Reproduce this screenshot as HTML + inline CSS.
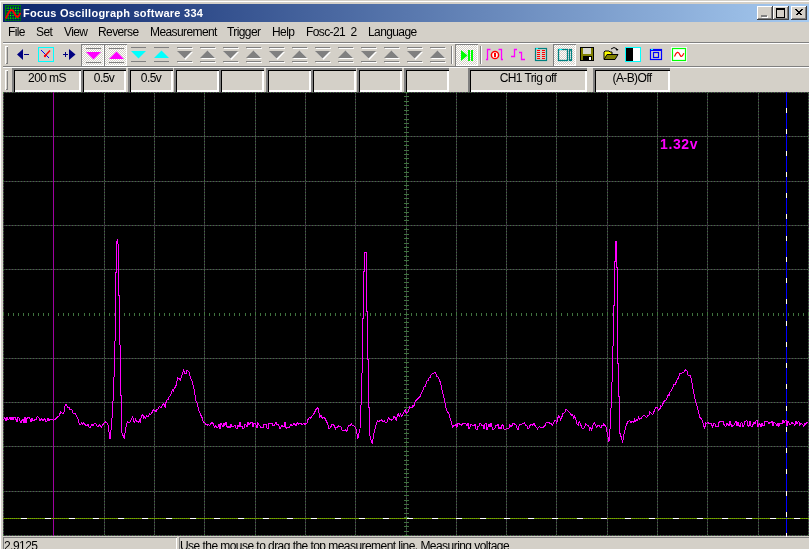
<!DOCTYPE html>
<html><head><meta charset="utf-8"><style>
html,body{margin:0;padding:0;}
body{width:809px;height:549px;overflow:hidden;background:#D4D0C8;position:relative;font-family:"Liberation Sans",sans-serif;}
div{will-change:transform;}
</style></head><body>
<div style="position:absolute;left:0px;top:0px;width:809px;height:1px;background:#D4D0C8;"></div><div style="position:absolute;left:0px;top:1px;width:809px;height:1px;background:#FFFFFF;"></div><div style="position:absolute;left:0px;top:1px;width:1px;height:548px;background:#FFFFFF;"></div><div style="position:absolute;left:1px;top:2px;width:808px;height:1px;background:#D4D0C8;"></div><div style="position:absolute;left:1px;top:2px;width:1px;height:547px;background:#D4D0C8;"></div><div style="position:absolute;left:3px;top:4px;width:806px;height:18px;background:linear-gradient(to right,#0A246A,#A6CAF0);"></div><div style="position:absolute;left:5px;top:5px;width:16px;height:16px;background:#008000"></div><svg style="position:absolute;left:5px;top:5px" width="16" height="16" viewBox="0 0 16 16">
<rect x="0" y="0" width="16" height="16" fill="#008000"/>
<g fill="#000080"><rect x="1.3" y="1.3" width="1.6" height="1.6"/><rect x="1.3" y="3.8" width="1.6" height="1.6"/><rect x="1.3" y="6.3" width="1.6" height="1.6"/><rect x="1.3" y="8.8" width="1.6" height="1.6"/><rect x="1.3" y="11.3" width="1.6" height="1.6"/><rect x="1.3" y="13.8" width="1.6" height="1.6"/><rect x="3.8" y="1.3" width="1.6" height="1.6"/><rect x="3.8" y="3.8" width="1.6" height="1.6"/><rect x="3.8" y="6.3" width="1.6" height="1.6"/><rect x="3.8" y="8.8" width="1.6" height="1.6"/><rect x="3.8" y="11.3" width="1.6" height="1.6"/><rect x="3.8" y="13.8" width="1.6" height="1.6"/><rect x="6.3" y="1.3" width="1.6" height="1.6"/><rect x="6.3" y="3.8" width="1.6" height="1.6"/><rect x="6.3" y="6.3" width="1.6" height="1.6"/><rect x="6.3" y="8.8" width="1.6" height="1.6"/><rect x="6.3" y="11.3" width="1.6" height="1.6"/><rect x="6.3" y="13.8" width="1.6" height="1.6"/><rect x="8.8" y="1.3" width="1.6" height="1.6"/><rect x="8.8" y="3.8" width="1.6" height="1.6"/><rect x="8.8" y="6.3" width="1.6" height="1.6"/><rect x="8.8" y="8.8" width="1.6" height="1.6"/><rect x="8.8" y="11.3" width="1.6" height="1.6"/><rect x="8.8" y="13.8" width="1.6" height="1.6"/><rect x="11.3" y="1.3" width="1.6" height="1.6"/><rect x="11.3" y="3.8" width="1.6" height="1.6"/><rect x="11.3" y="6.3" width="1.6" height="1.6"/><rect x="11.3" y="8.8" width="1.6" height="1.6"/><rect x="11.3" y="11.3" width="1.6" height="1.6"/><rect x="11.3" y="13.8" width="1.6" height="1.6"/><rect x="13.8" y="1.3" width="1.6" height="1.6"/><rect x="13.8" y="3.8" width="1.6" height="1.6"/><rect x="13.8" y="6.3" width="1.6" height="1.6"/><rect x="13.8" y="8.8" width="1.6" height="1.6"/><rect x="13.8" y="11.3" width="1.6" height="1.6"/><rect x="13.8" y="13.8" width="1.6" height="1.6"/></g><g fill="#00FF00"><rect x="2.5" y="2.5" width="1" height="1"/><rect x="2.5" y="5.0" width="1" height="1"/><rect x="2.5" y="7.5" width="1" height="1"/><rect x="2.5" y="10.0" width="1" height="1"/><rect x="2.5" y="12.5" width="1" height="1"/><rect x="5.0" y="2.5" width="1" height="1"/><rect x="5.0" y="5.0" width="1" height="1"/><rect x="5.0" y="7.5" width="1" height="1"/><rect x="5.0" y="10.0" width="1" height="1"/><rect x="5.0" y="12.5" width="1" height="1"/><rect x="7.5" y="2.5" width="1" height="1"/><rect x="7.5" y="5.0" width="1" height="1"/><rect x="7.5" y="7.5" width="1" height="1"/><rect x="7.5" y="10.0" width="1" height="1"/><rect x="7.5" y="12.5" width="1" height="1"/><rect x="10.0" y="2.5" width="1" height="1"/><rect x="10.0" y="5.0" width="1" height="1"/><rect x="10.0" y="7.5" width="1" height="1"/><rect x="10.0" y="10.0" width="1" height="1"/><rect x="10.0" y="12.5" width="1" height="1"/><rect x="12.5" y="2.5" width="1" height="1"/><rect x="12.5" y="5.0" width="1" height="1"/><rect x="12.5" y="7.5" width="1" height="1"/><rect x="12.5" y="10.0" width="1" height="1"/><rect x="12.5" y="12.5" width="1" height="1"/></g>
<path d="M0.8,13.5 C3,10 4,5 6.5,5 C9,5 10,12 12.5,12 C14,12 14.5,9 15.5,7.8" fill="none" stroke="#FF0000" stroke-width="1.8"/>
</svg><div style="position:absolute;left:23px;top:5px;height:16px;line-height:16px;color:#fff;font-weight:bold;font-size:11px;letter-spacing:0.25px;white-space:nowrap">Focus Oscillograph software 334</div><div style="position:absolute;left:757px;top:6px;width:16px;height:14px;background:#D4D0C8;box-shadow:inset -1px -1px #404040, inset 1px 1px #FFFFFF, inset -2px -2px #808080, inset 2px 2px #D4D0C8"><div style="position:absolute;left:4px;top:9px;width:6px;height:2px;background:#808080;box-shadow:1px 1px #fff"></div></div><div style="position:absolute;left:773px;top:6px;width:16px;height:14px;background:#D4D0C8;box-shadow:inset -1px -1px #404040, inset 1px 1px #FFFFFF, inset -2px -2px #808080, inset 2px 2px #D4D0C8"><div style="position:absolute;left:3px;top:2px;width:7px;height:7px;border:1px solid #000;border-top-width:2px"></div></div><div style="position:absolute;left:791px;top:6px;width:16px;height:14px;background:#D4D0C8;box-shadow:inset -1px -1px #404040, inset 1px 1px #FFFFFF, inset -2px -2px #808080, inset 2px 2px #D4D0C8"><svg style="position:absolute;left:0;top:0" width="16" height="14"><path d="M4.5,3.5 L10.5,9.5 M10.5,3.5 L4.5,9.5 M5.5,3.5 L11.5,9.5 M11.5,3.5 L5.5,9.5" stroke="#000" stroke-width="1" shape-rendering="crispEdges"/></svg></div><div style="position:absolute;left:8px;top:25px;height:14px;line-height:14px;font-size:12px;letter-spacing:-0.6px;color:#000;white-space:nowrap">File</div><div style="position:absolute;left:36px;top:25px;height:14px;line-height:14px;font-size:12px;letter-spacing:-0.6px;color:#000;white-space:nowrap">Set</div><div style="position:absolute;left:64px;top:25px;height:14px;line-height:14px;font-size:12px;letter-spacing:-0.6px;color:#000;white-space:nowrap">View</div><div style="position:absolute;left:98px;top:25px;height:14px;line-height:14px;font-size:12px;letter-spacing:-0.6px;color:#000;white-space:nowrap">Reverse</div><div style="position:absolute;left:150px;top:25px;height:14px;line-height:14px;font-size:12px;letter-spacing:-0.6px;color:#000;white-space:nowrap">Measurement</div><div style="position:absolute;left:227px;top:25px;height:14px;line-height:14px;font-size:12px;letter-spacing:-0.6px;color:#000;white-space:nowrap">Trigger</div><div style="position:absolute;left:272px;top:25px;height:14px;line-height:14px;font-size:12px;letter-spacing:-0.6px;color:#000;white-space:nowrap">Help</div><div style="position:absolute;left:306px;top:25px;height:14px;line-height:14px;font-size:12px;letter-spacing:-0.6px;color:#000;white-space:nowrap">Fosc-21&nbsp;&nbsp;2</div><div style="position:absolute;left:368px;top:25px;height:14px;line-height:14px;font-size:12px;letter-spacing:-0.6px;color:#000;white-space:nowrap">Language</div><div style="position:absolute;left:3px;top:42px;width:806px;height:1px;background:#808080;"></div><div style="position:absolute;left:3px;top:43px;width:806px;height:1px;background:#FFFFFF;"></div><div style="position:absolute;left:3px;top:66px;width:806px;height:1px;background:#808080;"></div><div style="position:absolute;left:3px;top:67px;width:806px;height:1px;background:#FFFFFF;"></div><div style="position:absolute;left:5px;top:46px;width:3px;height:18px;box-shadow:inset 1px 1px #fff, inset -1px -1px #808080"></div><div style="position:absolute;left:5px;top:70px;width:3px;height:20px;box-shadow:inset 1px 1px #fff, inset -1px -1px #808080"></div><svg style="position:absolute;left:0;top:0" width="809" height="92"><path d="M17,54.5 L23,49 L23,60 Z" fill="#000080"/><rect x="24" y="54" width="5" height="1" fill="#000080"/><rect x="38.5" y="47.5" width="15" height="14" fill="none" stroke="#00FFFF" stroke-width="1"/><path d="M41,50 L49,58" stroke="#0000FF" stroke-width="1"/><path d="M50,50.5 L45,56" stroke="#FF0000" stroke-width="1.5"/><circle cx="45" cy="56" r="1.2" fill="#FF0000"/><rect x="63" y="54" width="5" height="1" fill="#000080"/><rect x="65" y="52" width="1" height="5" fill="#000080"/><path d="M75.5,54.5 L69,49 L69,60 Z" fill="#000080"/></svg><div style="position:absolute;left:81px;top:44px;width:23px;height:22px;background:repeating-conic-gradient(#FFFFFF 0 25%, #D4D0C8 0 50%) 0 0/2px 2px;box-shadow:inset 1px 1px #808080, inset -1px -1px #FFFFFF"></div><div style="position:absolute;left:104px;top:44px;width:23px;height:22px;background:repeating-conic-gradient(#FFFFFF 0 25%, #D4D0C8 0 50%) 0 0/2px 2px;box-shadow:inset 1px 1px #808080, inset -1px -1px #FFFFFF"></div><svg style="position:absolute;left:0;top:0" width="809" height="92" shape-rendering="crispEdges"><rect x="86" y="48" width="15" height="1" fill="#808080"/><rect x="86" y="62" width="15" height="1" fill="#808080"/><path d="M86,52 L101,52 L93.5,59.5 Z" fill="#FF00FF" shape-rendering="auto"/><rect x="109" y="48" width="15" height="1" fill="#808080"/><rect x="109" y="62" width="15" height="1" fill="#808080"/><path d="M109,59 L124,59 L116.5,51.5 Z" fill="#FF00FF" shape-rendering="auto"/><rect x="131" y="47" width="15" height="1" fill="#808080"/><rect x="131" y="61" width="15" height="1" fill="#808080"/><path d="M131,51 L146,51 L138.5,58.5 Z" fill="#00FFFF" shape-rendering="auto"/><rect x="154" y="47" width="15" height="1" fill="#808080"/><rect x="154" y="61" width="15" height="1" fill="#808080"/><path d="M154,58 L169,58 L161.5,50.5 Z" fill="#00FFFF" shape-rendering="auto"/><rect x="178" y="48" width="15" height="1" fill="#fff"/><rect x="178" y="62" width="15" height="1" fill="#fff"/><path d="M178,52 L193,52 L185.5,60 Z" fill="#fff" shape-rendering="auto"/><rect x="177" y="47" width="15" height="1" fill="#808080"/><rect x="177" y="61" width="15" height="1" fill="#808080"/><path d="M177,51 L192,51 L184.5,58.5 Z" fill="#808080" shape-rendering="auto"/><rect x="201" y="48" width="15" height="1" fill="#fff"/><rect x="201" y="62" width="15" height="1" fill="#fff"/><path d="M201,59 L216,59 L208.5,51 Z" fill="#fff" shape-rendering="auto"/><rect x="200" y="47" width="15" height="1" fill="#808080"/><rect x="200" y="61" width="15" height="1" fill="#808080"/><path d="M200,58 L215,58 L207.5,50.5 Z" fill="#808080" shape-rendering="auto"/><rect x="224" y="48" width="15" height="1" fill="#fff"/><rect x="224" y="62" width="15" height="1" fill="#fff"/><path d="M224,52 L239,52 L231.5,60 Z" fill="#fff" shape-rendering="auto"/><rect x="223" y="47" width="15" height="1" fill="#808080"/><rect x="223" y="61" width="15" height="1" fill="#808080"/><path d="M223,51 L238,51 L230.5,58.5 Z" fill="#808080" shape-rendering="auto"/><rect x="247" y="48" width="15" height="1" fill="#fff"/><rect x="247" y="62" width="15" height="1" fill="#fff"/><path d="M247,59 L262,59 L254.5,51 Z" fill="#fff" shape-rendering="auto"/><rect x="246" y="47" width="15" height="1" fill="#808080"/><rect x="246" y="61" width="15" height="1" fill="#808080"/><path d="M246,58 L261,58 L253.5,50.5 Z" fill="#808080" shape-rendering="auto"/><rect x="270" y="48" width="15" height="1" fill="#fff"/><rect x="270" y="62" width="15" height="1" fill="#fff"/><path d="M270,52 L285,52 L277.5,60 Z" fill="#fff" shape-rendering="auto"/><rect x="269" y="47" width="15" height="1" fill="#808080"/><rect x="269" y="61" width="15" height="1" fill="#808080"/><path d="M269,51 L284,51 L276.5,58.5 Z" fill="#808080" shape-rendering="auto"/><rect x="293" y="48" width="15" height="1" fill="#fff"/><rect x="293" y="62" width="15" height="1" fill="#fff"/><path d="M293,59 L308,59 L300.5,51 Z" fill="#fff" shape-rendering="auto"/><rect x="292" y="47" width="15" height="1" fill="#808080"/><rect x="292" y="61" width="15" height="1" fill="#808080"/><path d="M292,58 L307,58 L299.5,50.5 Z" fill="#808080" shape-rendering="auto"/><rect x="316" y="48" width="15" height="1" fill="#fff"/><rect x="316" y="62" width="15" height="1" fill="#fff"/><path d="M316,52 L331,52 L323.5,60 Z" fill="#fff" shape-rendering="auto"/><rect x="315" y="47" width="15" height="1" fill="#808080"/><rect x="315" y="61" width="15" height="1" fill="#808080"/><path d="M315,51 L330,51 L322.5,58.5 Z" fill="#808080" shape-rendering="auto"/><rect x="339" y="48" width="15" height="1" fill="#fff"/><rect x="339" y="62" width="15" height="1" fill="#fff"/><path d="M339,59 L354,59 L346.5,51 Z" fill="#fff" shape-rendering="auto"/><rect x="338" y="47" width="15" height="1" fill="#808080"/><rect x="338" y="61" width="15" height="1" fill="#808080"/><path d="M338,58 L353,58 L345.5,50.5 Z" fill="#808080" shape-rendering="auto"/><rect x="362" y="48" width="15" height="1" fill="#fff"/><rect x="362" y="62" width="15" height="1" fill="#fff"/><path d="M362,52 L377,52 L369.5,60 Z" fill="#fff" shape-rendering="auto"/><rect x="361" y="47" width="15" height="1" fill="#808080"/><rect x="361" y="61" width="15" height="1" fill="#808080"/><path d="M361,51 L376,51 L368.5,58.5 Z" fill="#808080" shape-rendering="auto"/><rect x="385" y="48" width="15" height="1" fill="#fff"/><rect x="385" y="62" width="15" height="1" fill="#fff"/><path d="M385,59 L400,59 L392.5,51 Z" fill="#fff" shape-rendering="auto"/><rect x="384" y="47" width="15" height="1" fill="#808080"/><rect x="384" y="61" width="15" height="1" fill="#808080"/><path d="M384,58 L399,58 L391.5,50.5 Z" fill="#808080" shape-rendering="auto"/><rect x="408" y="48" width="15" height="1" fill="#fff"/><rect x="408" y="62" width="15" height="1" fill="#fff"/><path d="M408,52 L423,52 L415.5,60 Z" fill="#fff" shape-rendering="auto"/><rect x="407" y="47" width="15" height="1" fill="#808080"/><rect x="407" y="61" width="15" height="1" fill="#808080"/><path d="M407,51 L422,51 L414.5,58.5 Z" fill="#808080" shape-rendering="auto"/><rect x="431" y="48" width="15" height="1" fill="#fff"/><rect x="431" y="62" width="15" height="1" fill="#fff"/><path d="M431,59 L446,59 L438.5,51 Z" fill="#fff" shape-rendering="auto"/><rect x="430" y="47" width="15" height="1" fill="#808080"/><rect x="430" y="61" width="15" height="1" fill="#808080"/><path d="M430,58 L445,58 L437.5,50.5 Z" fill="#808080" shape-rendering="auto"/></svg><div style="position:absolute;left:451px;top:46px;width:1px;height:18px;background:#808080;"></div><div style="position:absolute;left:452px;top:46px;width:1px;height:18px;background:#FFFFFF;"></div><div style="position:absolute;left:455px;top:44px;width:23px;height:22px;background:repeating-conic-gradient(#FFFFFF 0 25%, #D4D0C8 0 50%) 0 0/2px 2px;box-shadow:inset 1px 1px #808080, inset -1px -1px #FFFFFF"></div><div style="position:absolute;left:480px;top:46px;width:1px;height:18px;background:#808080;"></div><div style="position:absolute;left:481px;top:46px;width:1px;height:18px;background:#FFFFFF;"></div><div style="position:absolute;left:553px;top:44px;width:23px;height:22px;background:repeating-conic-gradient(#FFFFFF 0 25%, #D4D0C8 0 50%) 0 0/2px 2px;box-shadow:inset 1px 1px #808080, inset -1px -1px #FFFFFF"></div><svg style="position:absolute;left:0;top:0" width="809" height="92"><path d="M461,50 L467.5,55.5 L461,61 Z" fill="#00FF00"/><rect x="468" y="50" width="2" height="11" fill="#00FF00"/><rect x="471" y="50" width="2" height="11" fill="#00FF00"/><path d="M490.5,49.5 H487.5 V59.5 H486" fill="none" stroke="#FF00FF" stroke-width="1.3"/><path d="M498.5,49.5 H501.5 V59.5 H503" fill="none" stroke="#FF00FF" stroke-width="1.3"/><circle cx="495" cy="55" r="3.6" fill="#FFFFFF" stroke="#FF0000" stroke-width="1.5"/><rect x="494" y="53" width="2" height="4" fill="#FF0000"/><path d="M511,56.5 H514.5 V49.5 H517 M519,52.5 H521.5 V59.5 H525" fill="none" stroke="#FF00FF" stroke-width="1.3"/><rect x="535.5" y="48.5" width="11" height="12" fill="none" stroke="#008080" stroke-width="1.2"/><rect x="536" y="48" width="2" height="1" fill="#00FFFF"/><rect x="537" y="50" width="3" height="1" fill="#FF0000"/><rect x="542" y="50" width="3" height="1" fill="#FF0000"/><rect x="537" y="52" width="3" height="1" fill="#FF0000"/><rect x="542" y="52" width="3" height="1" fill="#FF0000"/><rect x="537" y="54" width="3" height="1" fill="#FF0000"/><rect x="542" y="54" width="3" height="1" fill="#FF0000"/><rect x="537" y="56" width="3" height="1" fill="#FF0000"/><rect x="542" y="56" width="3" height="1" fill="#FF0000"/><rect x="537" y="58" width="3" height="1" fill="#FF0000"/><rect x="542" y="58" width="3" height="1" fill="#FF0000"/><rect x="558.5" y="49.5" width="9" height="11" fill="none" stroke="#008080" stroke-width="1.3"/><rect x="569.5" y="49.5" width="2" height="11" fill="none" stroke="#008080" stroke-width="1.2"/><rect x="559" y="49" width="3" height="1" fill="#00FFFF"/><rect x="580" y="47" width="14" height="14" fill="#000"/><rect x="581" y="48" width="12" height="12" fill="#808000"/><rect x="583" y="48" width="8" height="6" fill="#D8D8D0"/><rect x="583" y="56" width="9" height="5" fill="#000"/><rect x="589" y="57" width="2" height="3" fill="#fff"/><path d="M604,52 L605,51 L609,51 L610,52 L612,52 L612,54 L604,59 Z" fill="#FFFF00" stroke="#000" stroke-width="1"/><path d="M604,59.5 L607,54.5 L618,54.5 L615,59.5 Z" fill="#808000" stroke="#000" stroke-width="1"/><path d="M611,49 Q614,46 617,49" fill="none" stroke="#000" stroke-width="1"/><path d="M615.5,49 L618.5,49 L617,51 Z" fill="#000"/><rect x="625.5" y="47.5" width="15" height="14" fill="#FFFFFF" stroke="#00FFFF" stroke-width="1"/><rect x="626" y="48" width="7" height="13" fill="#000"/><rect x="650.5" y="49.5" width="11" height="10" fill="none" stroke="#0000FF" stroke-width="1.2"/><rect x="650" y="49" width="12" height="2" fill="#0000FF"/><rect x="651" y="49" width="2" height="1" fill="#00FFFF"/><rect x="653.5" y="52.5" width="5" height="5" fill="none" stroke="#0000FF" stroke-width="1.2"/><rect x="671" y="47" width="16" height="15" fill="#FFFFFF"/><rect x="672.5" y="48.5" width="13" height="12" fill="#FFFFFF" stroke="#00FF00" stroke-width="1.2"/><path d="M674.5,56.5 Q677.5,49 680,55 Q681.5,58.5 683.8,53.3" fill="none" stroke="#FF0000" stroke-width="1.2"/></svg><div style="position:absolute;left:12px;top:68px;width:69px;height:24px;box-shadow:inset 2px 2px #808080, inset 3px 3px #000000, inset -2px -2px #FFFFFF"><div style="position:absolute;left:0;top:3px;width:70px;height:14px;line-height:14px;font-size:12px;letter-spacing:-0.6px;text-align:center;white-space:nowrap;color:#000">200 mS</div></div><div style="position:absolute;left:81px;top:68px;width:45px;height:24px;box-shadow:inset 2px 2px #808080, inset 3px 3px #000000, inset -2px -2px #FFFFFF"><div style="position:absolute;left:0;top:3px;width:46px;height:14px;line-height:14px;font-size:12px;letter-spacing:-0.6px;text-align:center;white-space:nowrap;color:#000">0.5v</div></div><div style="position:absolute;left:128px;top:68px;width:45px;height:24px;box-shadow:inset 2px 2px #808080, inset 3px 3px #000000, inset -2px -2px #FFFFFF"><div style="position:absolute;left:0;top:3px;width:46px;height:14px;line-height:14px;font-size:12px;letter-spacing:-0.6px;text-align:center;white-space:nowrap;color:#000">0.5v</div></div><div style="position:absolute;left:174px;top:68px;width:45px;height:24px;box-shadow:inset 2px 2px #808080, inset 3px 3px #000000, inset -2px -2px #FFFFFF"><div style="position:absolute;left:0;top:3px;width:46px;height:14px;line-height:14px;font-size:12px;letter-spacing:-0.6px;text-align:center;white-space:nowrap;color:#000"></div></div><div style="position:absolute;left:219px;top:68px;width:45px;height:24px;box-shadow:inset 2px 2px #808080, inset 3px 3px #000000, inset -2px -2px #FFFFFF"><div style="position:absolute;left:0;top:3px;width:46px;height:14px;line-height:14px;font-size:12px;letter-spacing:-0.6px;text-align:center;white-space:nowrap;color:#000"></div></div><div style="position:absolute;left:266px;top:68px;width:45px;height:24px;box-shadow:inset 2px 2px #808080, inset 3px 3px #000000, inset -2px -2px #FFFFFF"><div style="position:absolute;left:0;top:3px;width:46px;height:14px;line-height:14px;font-size:12px;letter-spacing:-0.6px;text-align:center;white-space:nowrap;color:#000"></div></div><div style="position:absolute;left:311px;top:68px;width:45px;height:24px;box-shadow:inset 2px 2px #808080, inset 3px 3px #000000, inset -2px -2px #FFFFFF"><div style="position:absolute;left:0;top:3px;width:46px;height:14px;line-height:14px;font-size:12px;letter-spacing:-0.6px;text-align:center;white-space:nowrap;color:#000"></div></div><div style="position:absolute;left:357px;top:68px;width:45px;height:24px;box-shadow:inset 2px 2px #808080, inset 3px 3px #000000, inset -2px -2px #FFFFFF"><div style="position:absolute;left:0;top:3px;width:46px;height:14px;line-height:14px;font-size:12px;letter-spacing:-0.6px;text-align:center;white-space:nowrap;color:#000"></div></div><div style="position:absolute;left:404px;top:68px;width:45px;height:24px;box-shadow:inset 2px 2px #808080, inset 3px 3px #000000, inset -2px -2px #FFFFFF"><div style="position:absolute;left:0;top:3px;width:46px;height:14px;line-height:14px;font-size:12px;letter-spacing:-0.6px;text-align:center;white-space:nowrap;color:#000"></div></div><div style="position:absolute;left:468px;top:68px;width:119px;height:24px;box-shadow:inset 2px 2px #808080, inset 3px 3px #000000, inset -2px -2px #FFFFFF"><div style="position:absolute;left:0;top:3px;width:120px;height:14px;line-height:14px;font-size:12px;letter-spacing:-0.6px;text-align:center;white-space:nowrap;color:#000">CH1 Trig off</div></div><div style="position:absolute;left:593px;top:68px;width:77px;height:24px;box-shadow:inset 2px 2px #808080, inset 3px 3px #000000, inset -2px -2px #FFFFFF"><div style="position:absolute;left:0;top:3px;width:78px;height:14px;line-height:14px;font-size:12px;letter-spacing:-0.6px;text-align:center;white-space:nowrap;color:#000">(A-B)Off</div></div><svg style="position:absolute;left:0;top:0" width="809" height="549"><rect x="3" y="92" width="806" height="444" fill="#000"/><defs><pattern id="vdot" x="0" y="0" width="1" height="3" patternUnits="userSpaceOnUse"><rect width="1" height="3" fill="#3C2F40"/><rect width="1" height="1" fill="#40723F"/></pattern><pattern id="hdot" x="0" y="0" width="3" height="1" patternUnits="userSpaceOnUse"><rect width="3" height="1" fill="#3C2F40"/><rect width="1" height="1" fill="#40723F"/></pattern></defs><g shape-rendering="crispEdges"><rect x="3" y="92" width="1" height="444" fill="url(#vdot)"/><rect x="53" y="92" width="1" height="444" fill="url(#vdot)"/><rect x="104" y="92" width="1" height="444" fill="url(#vdot)"/><rect x="154" y="92" width="1" height="444" fill="url(#vdot)"/><rect x="204" y="92" width="1" height="444" fill="url(#vdot)"/><rect x="255" y="92" width="1" height="444" fill="url(#vdot)"/><rect x="305" y="92" width="1" height="444" fill="url(#vdot)"/><rect x="355" y="92" width="1" height="444" fill="url(#vdot)"/><rect x="456" y="92" width="1" height="444" fill="url(#vdot)"/><rect x="506" y="92" width="1" height="444" fill="url(#vdot)"/><rect x="556" y="92" width="1" height="444" fill="url(#vdot)"/><rect x="607" y="92" width="1" height="444" fill="url(#vdot)"/><rect x="657" y="92" width="1" height="444" fill="url(#vdot)"/><rect x="707" y="92" width="1" height="444" fill="url(#vdot)"/><rect x="758" y="92" width="1" height="444" fill="url(#vdot)"/><rect x="808" y="92" width="1" height="444" fill="url(#vdot)"/><rect x="3" y="92" width="806" height="1" fill="url(#hdot)"/><rect x="3" y="136" width="806" height="1" fill="url(#hdot)"/><rect x="3" y="181" width="806" height="1" fill="url(#hdot)"/><rect x="3" y="225" width="806" height="1" fill="url(#hdot)"/><rect x="3" y="269" width="806" height="1" fill="url(#hdot)"/><rect x="3" y="358" width="806" height="1" fill="url(#hdot)"/><rect x="3" y="402" width="806" height="1" fill="url(#hdot)"/><rect x="3" y="446" width="806" height="1" fill="url(#hdot)"/><rect x="3" y="491" width="806" height="1" fill="url(#hdot)"/><rect x="3" y="535" width="806" height="1" fill="url(#hdot)"/><rect x="406" y="92" width="1" height="444" fill="url(#vdot)"/><rect x="404" y="92" width="5" height="1" fill="#40723F"/><rect x="404" y="96" width="5" height="1" fill="#40723F"/><rect x="404" y="101" width="5" height="1" fill="#40723F"/><rect x="404" y="105" width="5" height="1" fill="#40723F"/><rect x="404" y="110" width="5" height="1" fill="#40723F"/><rect x="404" y="114" width="5" height="1" fill="#40723F"/><rect x="404" y="119" width="5" height="1" fill="#40723F"/><rect x="404" y="123" width="5" height="1" fill="#40723F"/><rect x="404" y="127" width="5" height="1" fill="#40723F"/><rect x="404" y="132" width="5" height="1" fill="#40723F"/><rect x="404" y="136" width="5" height="1" fill="#40723F"/><rect x="404" y="141" width="5" height="1" fill="#40723F"/><rect x="404" y="145" width="5" height="1" fill="#40723F"/><rect x="404" y="150" width="5" height="1" fill="#40723F"/><rect x="404" y="154" width="5" height="1" fill="#40723F"/><rect x="404" y="158" width="5" height="1" fill="#40723F"/><rect x="404" y="163" width="5" height="1" fill="#40723F"/><rect x="404" y="167" width="5" height="1" fill="#40723F"/><rect x="404" y="172" width="5" height="1" fill="#40723F"/><rect x="404" y="176" width="5" height="1" fill="#40723F"/><rect x="404" y="181" width="5" height="1" fill="#40723F"/><rect x="404" y="185" width="5" height="1" fill="#40723F"/><rect x="404" y="189" width="5" height="1" fill="#40723F"/><rect x="404" y="194" width="5" height="1" fill="#40723F"/><rect x="404" y="198" width="5" height="1" fill="#40723F"/><rect x="404" y="203" width="5" height="1" fill="#40723F"/><rect x="404" y="207" width="5" height="1" fill="#40723F"/><rect x="404" y="212" width="5" height="1" fill="#40723F"/><rect x="404" y="216" width="5" height="1" fill="#40723F"/><rect x="404" y="220" width="5" height="1" fill="#40723F"/><rect x="404" y="225" width="5" height="1" fill="#40723F"/><rect x="404" y="229" width="5" height="1" fill="#40723F"/><rect x="404" y="234" width="5" height="1" fill="#40723F"/><rect x="404" y="238" width="5" height="1" fill="#40723F"/><rect x="404" y="243" width="5" height="1" fill="#40723F"/><rect x="404" y="247" width="5" height="1" fill="#40723F"/><rect x="404" y="251" width="5" height="1" fill="#40723F"/><rect x="404" y="256" width="5" height="1" fill="#40723F"/><rect x="404" y="260" width="5" height="1" fill="#40723F"/><rect x="404" y="265" width="5" height="1" fill="#40723F"/><rect x="404" y="269" width="5" height="1" fill="#40723F"/><rect x="404" y="274" width="5" height="1" fill="#40723F"/><rect x="404" y="278" width="5" height="1" fill="#40723F"/><rect x="404" y="282" width="5" height="1" fill="#40723F"/><rect x="404" y="287" width="5" height="1" fill="#40723F"/><rect x="404" y="291" width="5" height="1" fill="#40723F"/><rect x="404" y="296" width="5" height="1" fill="#40723F"/><rect x="404" y="300" width="5" height="1" fill="#40723F"/><rect x="404" y="305" width="5" height="1" fill="#40723F"/><rect x="404" y="309" width="5" height="1" fill="#40723F"/><rect x="404" y="314" width="5" height="1" fill="#40723F"/><rect x="404" y="318" width="5" height="1" fill="#40723F"/><rect x="404" y="322" width="5" height="1" fill="#40723F"/><rect x="404" y="327" width="5" height="1" fill="#40723F"/><rect x="404" y="331" width="5" height="1" fill="#40723F"/><rect x="404" y="336" width="5" height="1" fill="#40723F"/><rect x="404" y="340" width="5" height="1" fill="#40723F"/><rect x="404" y="345" width="5" height="1" fill="#40723F"/><rect x="404" y="349" width="5" height="1" fill="#40723F"/><rect x="404" y="353" width="5" height="1" fill="#40723F"/><rect x="404" y="358" width="5" height="1" fill="#40723F"/><rect x="404" y="362" width="5" height="1" fill="#40723F"/><rect x="404" y="367" width="5" height="1" fill="#40723F"/><rect x="404" y="371" width="5" height="1" fill="#40723F"/><rect x="404" y="376" width="5" height="1" fill="#40723F"/><rect x="404" y="380" width="5" height="1" fill="#40723F"/><rect x="404" y="384" width="5" height="1" fill="#40723F"/><rect x="404" y="389" width="5" height="1" fill="#40723F"/><rect x="404" y="393" width="5" height="1" fill="#40723F"/><rect x="404" y="398" width="5" height="1" fill="#40723F"/><rect x="404" y="402" width="5" height="1" fill="#40723F"/><rect x="404" y="407" width="5" height="1" fill="#40723F"/><rect x="404" y="411" width="5" height="1" fill="#40723F"/><rect x="404" y="415" width="5" height="1" fill="#40723F"/><rect x="404" y="420" width="5" height="1" fill="#40723F"/><rect x="404" y="424" width="5" height="1" fill="#40723F"/><rect x="404" y="429" width="5" height="1" fill="#40723F"/><rect x="404" y="433" width="5" height="1" fill="#40723F"/><rect x="404" y="438" width="5" height="1" fill="#40723F"/><rect x="404" y="442" width="5" height="1" fill="#40723F"/><rect x="404" y="446" width="5" height="1" fill="#40723F"/><rect x="404" y="451" width="5" height="1" fill="#40723F"/><rect x="404" y="455" width="5" height="1" fill="#40723F"/><rect x="404" y="460" width="5" height="1" fill="#40723F"/><rect x="404" y="464" width="5" height="1" fill="#40723F"/><rect x="404" y="469" width="5" height="1" fill="#40723F"/><rect x="404" y="473" width="5" height="1" fill="#40723F"/><rect x="404" y="477" width="5" height="1" fill="#40723F"/><rect x="404" y="482" width="5" height="1" fill="#40723F"/><rect x="404" y="486" width="5" height="1" fill="#40723F"/><rect x="404" y="491" width="5" height="1" fill="#40723F"/><rect x="404" y="495" width="5" height="1" fill="#40723F"/><rect x="404" y="500" width="5" height="1" fill="#40723F"/><rect x="404" y="504" width="5" height="1" fill="#40723F"/><rect x="404" y="508" width="5" height="1" fill="#40723F"/><rect x="404" y="513" width="5" height="1" fill="#40723F"/><rect x="404" y="517" width="5" height="1" fill="#40723F"/><rect x="404" y="522" width="5" height="1" fill="#40723F"/><rect x="404" y="526" width="5" height="1" fill="#40723F"/><rect x="404" y="531" width="5" height="1" fill="#40723F"/><rect x="404" y="535" width="5" height="1" fill="#40723F"/><rect x="3" y="313" width="1" height="3" fill="#40723F"/><rect x="8" y="313" width="1" height="3" fill="#40723F"/><rect x="13" y="313" width="1" height="3" fill="#40723F"/><rect x="18" y="313" width="1" height="3" fill="#40723F"/><rect x="23" y="313" width="1" height="3" fill="#40723F"/><rect x="28" y="313" width="1" height="3" fill="#40723F"/><rect x="33" y="313" width="1" height="3" fill="#40723F"/><rect x="38" y="313" width="1" height="3" fill="#40723F"/><rect x="43" y="313" width="1" height="3" fill="#40723F"/><rect x="48" y="313" width="1" height="3" fill="#40723F"/><rect x="53" y="313" width="1" height="3" fill="#40723F"/><rect x="58" y="313" width="1" height="3" fill="#40723F"/><rect x="63" y="313" width="1" height="3" fill="#40723F"/><rect x="68" y="313" width="1" height="3" fill="#40723F"/><rect x="73" y="313" width="1" height="3" fill="#40723F"/><rect x="78" y="313" width="1" height="3" fill="#40723F"/><rect x="84" y="313" width="1" height="3" fill="#40723F"/><rect x="89" y="313" width="1" height="3" fill="#40723F"/><rect x="94" y="313" width="1" height="3" fill="#40723F"/><rect x="99" y="313" width="1" height="3" fill="#40723F"/><rect x="104" y="313" width="1" height="3" fill="#40723F"/><rect x="109" y="313" width="1" height="3" fill="#40723F"/><rect x="114" y="313" width="1" height="3" fill="#40723F"/><rect x="119" y="313" width="1" height="3" fill="#40723F"/><rect x="124" y="313" width="1" height="3" fill="#40723F"/><rect x="129" y="313" width="1" height="3" fill="#40723F"/><rect x="134" y="313" width="1" height="3" fill="#40723F"/><rect x="139" y="313" width="1" height="3" fill="#40723F"/><rect x="144" y="313" width="1" height="3" fill="#40723F"/><rect x="149" y="313" width="1" height="3" fill="#40723F"/><rect x="154" y="313" width="1" height="3" fill="#40723F"/><rect x="159" y="313" width="1" height="3" fill="#40723F"/><rect x="164" y="313" width="1" height="3" fill="#40723F"/><rect x="169" y="313" width="1" height="3" fill="#40723F"/><rect x="174" y="313" width="1" height="3" fill="#40723F"/><rect x="179" y="313" width="1" height="3" fill="#40723F"/><rect x="184" y="313" width="1" height="3" fill="#40723F"/><rect x="189" y="313" width="1" height="3" fill="#40723F"/><rect x="194" y="313" width="1" height="3" fill="#40723F"/><rect x="199" y="313" width="1" height="3" fill="#40723F"/><rect x="204" y="313" width="1" height="3" fill="#40723F"/><rect x="209" y="313" width="1" height="3" fill="#40723F"/><rect x="214" y="313" width="1" height="3" fill="#40723F"/><rect x="219" y="313" width="1" height="3" fill="#40723F"/><rect x="224" y="313" width="1" height="3" fill="#40723F"/><rect x="229" y="313" width="1" height="3" fill="#40723F"/><rect x="234" y="313" width="1" height="3" fill="#40723F"/><rect x="239" y="313" width="1" height="3" fill="#40723F"/><rect x="245" y="313" width="1" height="3" fill="#40723F"/><rect x="250" y="313" width="1" height="3" fill="#40723F"/><rect x="255" y="313" width="1" height="3" fill="#40723F"/><rect x="260" y="313" width="1" height="3" fill="#40723F"/><rect x="265" y="313" width="1" height="3" fill="#40723F"/><rect x="270" y="313" width="1" height="3" fill="#40723F"/><rect x="275" y="313" width="1" height="3" fill="#40723F"/><rect x="280" y="313" width="1" height="3" fill="#40723F"/><rect x="285" y="313" width="1" height="3" fill="#40723F"/><rect x="290" y="313" width="1" height="3" fill="#40723F"/><rect x="295" y="313" width="1" height="3" fill="#40723F"/><rect x="300" y="313" width="1" height="3" fill="#40723F"/><rect x="305" y="313" width="1" height="3" fill="#40723F"/><rect x="310" y="313" width="1" height="3" fill="#40723F"/><rect x="315" y="313" width="1" height="3" fill="#40723F"/><rect x="320" y="313" width="1" height="3" fill="#40723F"/><rect x="325" y="313" width="1" height="3" fill="#40723F"/><rect x="330" y="313" width="1" height="3" fill="#40723F"/><rect x="335" y="313" width="1" height="3" fill="#40723F"/><rect x="340" y="313" width="1" height="3" fill="#40723F"/><rect x="345" y="313" width="1" height="3" fill="#40723F"/><rect x="350" y="313" width="1" height="3" fill="#40723F"/><rect x="355" y="313" width="1" height="3" fill="#40723F"/><rect x="360" y="313" width="1" height="3" fill="#40723F"/><rect x="365" y="313" width="1" height="3" fill="#40723F"/><rect x="370" y="313" width="1" height="3" fill="#40723F"/><rect x="375" y="313" width="1" height="3" fill="#40723F"/><rect x="380" y="313" width="1" height="3" fill="#40723F"/><rect x="385" y="313" width="1" height="3" fill="#40723F"/><rect x="390" y="313" width="1" height="3" fill="#40723F"/><rect x="395" y="313" width="1" height="3" fill="#40723F"/><rect x="400" y="313" width="1" height="3" fill="#40723F"/><rect x="406" y="313" width="1" height="3" fill="#40723F"/><rect x="411" y="313" width="1" height="3" fill="#40723F"/><rect x="416" y="313" width="1" height="3" fill="#40723F"/><rect x="421" y="313" width="1" height="3" fill="#40723F"/><rect x="426" y="313" width="1" height="3" fill="#40723F"/><rect x="431" y="313" width="1" height="3" fill="#40723F"/><rect x="436" y="313" width="1" height="3" fill="#40723F"/><rect x="441" y="313" width="1" height="3" fill="#40723F"/><rect x="446" y="313" width="1" height="3" fill="#40723F"/><rect x="451" y="313" width="1" height="3" fill="#40723F"/><rect x="456" y="313" width="1" height="3" fill="#40723F"/><rect x="461" y="313" width="1" height="3" fill="#40723F"/><rect x="466" y="313" width="1" height="3" fill="#40723F"/><rect x="471" y="313" width="1" height="3" fill="#40723F"/><rect x="476" y="313" width="1" height="3" fill="#40723F"/><rect x="481" y="313" width="1" height="3" fill="#40723F"/><rect x="486" y="313" width="1" height="3" fill="#40723F"/><rect x="491" y="313" width="1" height="3" fill="#40723F"/><rect x="496" y="313" width="1" height="3" fill="#40723F"/><rect x="501" y="313" width="1" height="3" fill="#40723F"/><rect x="506" y="313" width="1" height="3" fill="#40723F"/><rect x="511" y="313" width="1" height="3" fill="#40723F"/><rect x="516" y="313" width="1" height="3" fill="#40723F"/><rect x="521" y="313" width="1" height="3" fill="#40723F"/><rect x="526" y="313" width="1" height="3" fill="#40723F"/><rect x="531" y="313" width="1" height="3" fill="#40723F"/><rect x="536" y="313" width="1" height="3" fill="#40723F"/><rect x="541" y="313" width="1" height="3" fill="#40723F"/><rect x="546" y="313" width="1" height="3" fill="#40723F"/><rect x="551" y="313" width="1" height="3" fill="#40723F"/><rect x="556" y="313" width="1" height="3" fill="#40723F"/><rect x="561" y="313" width="1" height="3" fill="#40723F"/><rect x="567" y="313" width="1" height="3" fill="#40723F"/><rect x="572" y="313" width="1" height="3" fill="#40723F"/><rect x="577" y="313" width="1" height="3" fill="#40723F"/><rect x="582" y="313" width="1" height="3" fill="#40723F"/><rect x="587" y="313" width="1" height="3" fill="#40723F"/><rect x="592" y="313" width="1" height="3" fill="#40723F"/><rect x="597" y="313" width="1" height="3" fill="#40723F"/><rect x="602" y="313" width="1" height="3" fill="#40723F"/><rect x="607" y="313" width="1" height="3" fill="#40723F"/><rect x="612" y="313" width="1" height="3" fill="#40723F"/><rect x="617" y="313" width="1" height="3" fill="#40723F"/><rect x="622" y="313" width="1" height="3" fill="#40723F"/><rect x="627" y="313" width="1" height="3" fill="#40723F"/><rect x="632" y="313" width="1" height="3" fill="#40723F"/><rect x="637" y="313" width="1" height="3" fill="#40723F"/><rect x="642" y="313" width="1" height="3" fill="#40723F"/><rect x="647" y="313" width="1" height="3" fill="#40723F"/><rect x="652" y="313" width="1" height="3" fill="#40723F"/><rect x="657" y="313" width="1" height="3" fill="#40723F"/><rect x="662" y="313" width="1" height="3" fill="#40723F"/><rect x="667" y="313" width="1" height="3" fill="#40723F"/><rect x="672" y="313" width="1" height="3" fill="#40723F"/><rect x="677" y="313" width="1" height="3" fill="#40723F"/><rect x="682" y="313" width="1" height="3" fill="#40723F"/><rect x="687" y="313" width="1" height="3" fill="#40723F"/><rect x="692" y="313" width="1" height="3" fill="#40723F"/><rect x="697" y="313" width="1" height="3" fill="#40723F"/><rect x="702" y="313" width="1" height="3" fill="#40723F"/><rect x="707" y="313" width="1" height="3" fill="#40723F"/><rect x="712" y="313" width="1" height="3" fill="#40723F"/><rect x="717" y="313" width="1" height="3" fill="#40723F"/><rect x="722" y="313" width="1" height="3" fill="#40723F"/><rect x="728" y="313" width="1" height="3" fill="#40723F"/><rect x="733" y="313" width="1" height="3" fill="#40723F"/><rect x="738" y="313" width="1" height="3" fill="#40723F"/><rect x="743" y="313" width="1" height="3" fill="#40723F"/><rect x="748" y="313" width="1" height="3" fill="#40723F"/><rect x="753" y="313" width="1" height="3" fill="#40723F"/><rect x="758" y="313" width="1" height="3" fill="#40723F"/><rect x="763" y="313" width="1" height="3" fill="#40723F"/><rect x="768" y="313" width="1" height="3" fill="#40723F"/><rect x="773" y="313" width="1" height="3" fill="#40723F"/><rect x="778" y="313" width="1" height="3" fill="#40723F"/><rect x="783" y="313" width="1" height="3" fill="#40723F"/><rect x="788" y="313" width="1" height="3" fill="#40723F"/><rect x="793" y="313" width="1" height="3" fill="#40723F"/><rect x="798" y="313" width="1" height="3" fill="#40723F"/><rect x="803" y="313" width="1" height="3" fill="#40723F"/><rect x="808" y="313" width="1" height="3" fill="#40723F"/></g><rect x="53" y="92" width="1" height="444" fill="#A000A0"/><rect x="786" y="92" width="1" height="444" fill="#0000FF"/><rect x="786" y="108" width="1" height="5" fill="#FFFFFF"/><rect x="786" y="129" width="1" height="5" fill="#FFFFFF"/><rect x="786" y="151" width="1" height="5" fill="#FFFFFF"/><rect x="786" y="172" width="1" height="5" fill="#FFFFFF"/><rect x="786" y="193" width="1" height="5" fill="#FFFFFF"/><rect x="786" y="214" width="1" height="5" fill="#FFFFFF"/><rect x="786" y="236" width="1" height="5" fill="#FFFFFF"/><rect x="786" y="257" width="1" height="5" fill="#FFFFFF"/><rect x="786" y="278" width="1" height="5" fill="#FFFFFF"/><rect x="786" y="299" width="1" height="5" fill="#FFFFFF"/><rect x="786" y="321" width="1" height="5" fill="#FFFFFF"/><rect x="786" y="342" width="1" height="5" fill="#FFFFFF"/><rect x="786" y="363" width="1" height="5" fill="#FFFFFF"/><rect x="786" y="384" width="1" height="5" fill="#FFFFFF"/><rect x="786" y="406" width="1" height="5" fill="#FFFFFF"/><rect x="786" y="427" width="1" height="5" fill="#FFFFFF"/><rect x="786" y="448" width="1" height="5" fill="#FFFFFF"/><rect x="786" y="469" width="1" height="5" fill="#FFFFFF"/><rect x="786" y="491" width="1" height="5" fill="#FFFFFF"/><rect x="786" y="512" width="1" height="5" fill="#FFFFFF"/><rect x="786" y="533" width="1" height="5" fill="#FFFFFF"/><defs><pattern id="gdot" x="0" y="0" width="2" height="1" patternUnits="userSpaceOnUse"><rect width="2" height="1" fill="#7A6A00"/><rect width="1" height="1" fill="#5CC000"/></pattern></defs><rect x="3" y="518" width="806" height="1" fill="url(#gdot)"/><rect x="21" y="518" width="6" height="1" fill="#FFFFFF"/><rect x="45" y="518" width="6" height="1" fill="#FFFFFF"/><rect x="69" y="518" width="6" height="1" fill="#FFFFFF"/><rect x="93" y="518" width="6" height="1" fill="#FFFFFF"/><rect x="118" y="518" width="6" height="1" fill="#FFFFFF"/><rect x="142" y="518" width="6" height="1" fill="#FFFFFF"/><rect x="166" y="518" width="6" height="1" fill="#FFFFFF"/><rect x="190" y="518" width="6" height="1" fill="#FFFFFF"/><rect x="214" y="518" width="6" height="1" fill="#FFFFFF"/><rect x="238" y="518" width="6" height="1" fill="#FFFFFF"/><rect x="263" y="518" width="6" height="1" fill="#FFFFFF"/><rect x="287" y="518" width="6" height="1" fill="#FFFFFF"/><rect x="311" y="518" width="6" height="1" fill="#FFFFFF"/><rect x="335" y="518" width="6" height="1" fill="#FFFFFF"/><rect x="359" y="518" width="6" height="1" fill="#FFFFFF"/><rect x="383" y="518" width="6" height="1" fill="#FFFFFF"/><rect x="407" y="518" width="6" height="1" fill="#FFFFFF"/><rect x="432" y="518" width="6" height="1" fill="#FFFFFF"/><rect x="456" y="518" width="6" height="1" fill="#FFFFFF"/><rect x="480" y="518" width="6" height="1" fill="#FFFFFF"/><rect x="504" y="518" width="6" height="1" fill="#FFFFFF"/><rect x="528" y="518" width="6" height="1" fill="#FFFFFF"/><rect x="552" y="518" width="6" height="1" fill="#FFFFFF"/><rect x="577" y="518" width="6" height="1" fill="#FFFFFF"/><rect x="601" y="518" width="6" height="1" fill="#FFFFFF"/><rect x="625" y="518" width="6" height="1" fill="#FFFFFF"/><rect x="649" y="518" width="6" height="1" fill="#FFFFFF"/><rect x="673" y="518" width="6" height="1" fill="#FFFFFF"/><rect x="697" y="518" width="6" height="1" fill="#FFFFFF"/><rect x="722" y="518" width="6" height="1" fill="#FFFFFF"/><rect x="746" y="518" width="6" height="1" fill="#FFFFFF"/><rect x="770" y="518" width="6" height="1" fill="#FFFFFF"/><rect x="794" y="518" width="6" height="1" fill="#FFFFFF"/><polyline points="3.0,420.0 4.0,418.8 5.0,417.6 6.0,421.1 7.0,417.0 8.0,420.3 9.0,419.1 10.0,416.9 11.0,420.1 12.0,416.8 13.0,419.5 14.0,417.0 15.0,417.1 16.0,419.5 17.0,422.3 18.0,417.4 19.0,418.1 20.0,420.9 21.0,423.1 22.0,420.5 23.0,419.3 24.0,423.3 25.0,416.8 26.0,422.5 27.0,418.5 28.0,417.5 29.0,417.3 30.0,418.7 31.0,422.2 32.0,417.8 33.0,420.6 34.0,421.0 35.0,419.1 36.0,420.3 37.0,416.9 38.0,416.9 39.0,417.9 40.0,421.3 41.0,419.5 42.0,418.7 43.0,420.6 44.0,419.7 45.0,418.6 46.0,422.1 47.0,421.4 48.0,418.2 49.0,420.5 50.0,419.0 51.1,419.3 52.2,419.5 53.3,420.4 54.4,420.0 55.5,418.8 56.5,418.1 57.6,416.9 58.7,416.0 59.5,415.6 60.4,412.0 61.4,412.6 62.3,413.2 63.2,413.4 64.2,411.7 65.3,404.6 66.2,404.4 67.2,406.2 68.1,408.2 69.1,407.3 70.1,409.9 71.0,408.7 72.0,410.1 73.0,412.8 74.0,413.5 74.9,413.2 75.8,414.7 76.8,416.6 77.7,417.6 78.6,422.3 79.5,424.3 80.6,424.5 81.7,422.6 82.8,424.7 83.9,422.7 85.0,424.6 86.0,425.7 87.0,425.8 88.0,424.2 89.0,427.2 90.0,427.8 91.0,426.4 92.1,424.3 93.2,425.8 94.3,423.0 95.3,423.2 96.3,424.1 97.3,426.5 98.4,426.5 99.4,424.6 100.4,426.2 101.4,427.0 102.5,425.4 103.6,423.7 104.5,422.8 105.4,421.9 106.3,422.6 107.3,423.4 108.3,425.6 109.2,433.1 110.0,439.0 111.2,428.5 112.8,407.0 113.6,385.8 114.4,368.0 115.5,320.0 115.5,273.0 116.3,272.0 116.3,244.0 117.5,239.0 118.4,248.0 118.4,295.0 119.4,295.0 119.6,320.0 120.4,368.0 120.4,395.0 121.3,395.0 121.3,431.0 122.3,433.9 123.3,436.1 124.3,439.0 125.4,430.0 126.6,424.0 127.6,421.8 128.6,422.5 129.6,422.6 130.6,421.1 131.5,418.7 132.5,416.7 133.4,418.4 134.3,423.2 135.5,419.0 136.4,421.3 137.4,421.2 138.3,422.5 139.3,420.0 140.2,422.0 141.1,417.9 142.0,415.5 142.9,414.4 143.8,417.7 144.7,416.5 145.6,417.9 146.6,415.9 147.5,416.4 148.5,416.0 149.7,413.7 150.6,414.6 151.6,413.7 152.5,411.1 153.5,410.1 154.4,410.8 155.0,410.5 155.9,411.6 156.8,409.9 157.8,409.9 158.7,407.2 159.6,406.7 160.5,407.8 161.6,407.1 162.8,404.8 163.9,403.7 165.2,407.0 166.2,401.5 167.3,399.0 168.3,399.0 169.4,396.4 170.4,395.4 171.4,392.8 172.4,389.9 173.4,391.3 174.5,387.1 175.5,387.3 176.5,383.9 177.5,377.8 178.4,378.3 179.4,378.6 180.3,379.8 181.6,376.4 182.6,373.2 183.7,369.6 185.0,373.7 186.1,373.5 187.1,370.2 188.0,371.0 188.9,372.1 189.8,375.0 190.7,378.1 191.7,380.0 192.6,383.9 193.6,386.6 194.6,392.1 196.0,401.0 196.9,402.9 197.8,405.7 198.7,410.5 199.6,411.5 200.5,414.0 201.4,416.7 202.3,418.0 203.3,421.7 204.2,422.8 205.2,423.1 206.2,424.9 207.3,425.1 208.5,424.2 209.6,425.6 210.6,423.6 211.7,422.8 212.6,422.5 213.5,424.7 214.4,427.0 216.0,425.7 217.0,428.1 218.0,427.1 219.0,424.0 220.0,428.9 221.0,422.8 222.0,424.9 223.0,427.3 224.0,423.1 225.0,425.4 226.0,422.3 227.0,426.7 228.0,427.4 229.0,426.0 230.0,428.1 231.0,424.2 232.0,426.9 233.0,426.2 234.0,426.1 235.0,425.2 236.0,427.9 237.0,428.6 238.0,425.3 239.0,426.6 240.0,422.4 241.0,426.9 242.0,426.5 243.0,429.0 244.0,427.8 245.0,424.0 246.0,424.7 247.0,426.7 248.0,422.2 249.0,425.2 250.0,423.2 251.0,422.8 252.0,422.4 253.0,427.4 254.0,422.9 255.0,423.7 256.0,424.7 257.0,428.1 258.0,422.6 259.0,425.1 260.0,425.8 261.0,428.2 262.0,427.7 263.0,428.0 264.0,423.9 265.0,424.9 266.0,424.5 267.0,428.2 268.0,428.7 269.0,423.1 270.0,423.2 271.0,423.6 272.0,423.6 273.0,425.4 274.0,426.1 275.0,423.8 276.0,422.0 277.0,424.9 278.0,424.6 279.0,426.0 280.0,428.7 281.0,426.8 282.0,425.6 283.0,426.3 284.0,426.7 285.0,422.4 286.0,428.3 287.0,427.5 288.0,428.1 289.0,427.6 290.0,425.9 291.0,423.9 292.0,426.1 293.0,425.2 294.0,423.6 295.1,424.3 296.1,425.7 297.1,422.4 298.1,424.6 299.1,423.2 300.2,423.1 301.2,423.5 302.3,424.9 303.4,423.4 304.4,424.0 305.5,424.1 306.4,423.2 307.3,422.6 308.2,418.7 309.1,417.7 310.2,418.3 311.2,417.2 312.3,415.9 313.5,414.6 314.6,412.3 315.5,410.4 316.4,408.7 317.3,407.7 318.2,408.8 319.1,413.2 319.6,417.3 320.5,416.0 321.4,415.8 322.3,418.2 323.2,417.3 324.3,417.8 325.3,418.8 326.4,421.4 327.5,423.3 328.7,428.2 329.6,428.4 330.5,427.5 331.4,425.7 332.3,424.1 333.4,424.8 334.4,426.2 335.5,428.7 336.4,427.4 337.3,427.4 338.2,425.7 339.1,426.4 340.1,426.9 341.2,427.0 342.2,430.2 343.3,431.0 344.3,430.1 345.4,429.8 346.4,431.4 347.3,430.3 348.2,425.9 349.2,425.1 350.2,425.2 351.3,423.8 352.3,425.1 353.3,425.4 354.5,426.5 355.7,427.8 356.9,433.2 358.0,438.5 359.0,432.7 360.0,429.0 361.1,403.0 362.3,363.8 362.5,319.0 363.7,318.6 363.7,271.0 364.5,271.0 364.5,252.0 366.0,252.0 366.3,263.0 366.3,311.0 367.3,311.0 367.5,359.0 368.7,359.0 368.7,407.7 369.9,407.7 369.9,436.0 371.1,440.2 372.3,444.4 373.5,435.5 374.6,430.2 375.0,429.0 375.9,425.4 376.8,422.1 377.7,420.8 378.2,421.9 379.2,421.5 380.2,420.1 381.2,419.9 382.2,420.9 383.2,421.5 384.3,421.0 385.5,422.7 386.6,422.8 387.6,420.2 388.7,417.4 389.6,419.2 390.5,419.8 391.4,420.1 392.3,419.5 393.2,418.7 394.1,416.0 395.1,417.7 396.2,420.1 397.2,416.4 398.2,414.0 399.3,416.4 400.5,414.1 401.6,416.0 402.5,415.2 403.5,413.3 404.4,411.2 405.3,410.0 406.2,413.3 407.1,412.6 408.0,412.2 408.9,409.4 409.8,407.1 410.8,407.8 411.9,407.9 412.9,405.3 413.9,406.4 415.3,401.0 416.4,400.0 417.6,398.7 418.7,397.6 419.6,397.2 420.5,395.5 421.4,392.8 422.3,391.9 423.3,389.0 424.2,386.6 425.1,386.2 426.0,383.7 426.9,381.2 428.0,380.5 429.2,377.5 430.3,377.1 431.3,374.4 432.4,373.7 433.4,373.5 434.4,373.0 435.5,372.7 436.7,376.5 437.8,376.4 438.7,378.6 439.7,380.9 440.6,382.5 441.9,390.0 443.0,394.0 443.9,398.0 444.7,401.0 445.6,406.2 446.5,410.0 447.5,412.0 448.5,412.2 449.5,416.0 450.5,420.1 451.5,422.0 452.5,427.0 454.0,425.7 455.0,425.8 456.0,423.7 457.0,427.4 458.0,423.4 459.0,423.5 460.0,424.5 461.0,424.1 462.0,425.4 463.0,423.4 464.0,423.0 465.0,424.1 466.0,423.7 467.0,425.5 468.0,423.2 469.0,429.1 470.0,427.3 471.0,424.0 472.0,424.8 473.0,425.4 474.0,425.5 475.0,423.9 476.0,428.9 477.0,430.0 478.0,426.3 479.0,426.4 480.0,423.6 481.0,423.7 482.0,425.4 483.0,424.9 484.0,428.8 485.0,424.1 486.0,423.2 487.0,429.7 488.0,426.7 489.0,424.0 490.0,426.8 491.0,423.2 492.0,426.7 493.0,429.8 494.0,429.0 495.0,427.9 496.0,424.8 497.0,425.6 498.0,424.2 499.0,428.4 500.0,426.7 501.0,428.5 502.0,425.3 503.0,424.6 504.0,428.7 505.0,429.9 506.0,429.0 507.0,428.6 508.0,428.7 509.0,428.2 510.0,424.6 511.0,426.6 512.0,425.5 513.0,423.2 514.0,423.2 515.0,425.0 516.0,424.8 517.0,427.8 518.0,429.7 519.0,426.1 520.0,424.5 521.1,425.0 522.2,423.7 523.3,423.4 524.4,422.8 525.5,425.2 526.7,425.0 527.8,428.4 528.7,428.5 529.6,426.0 530.5,424.6 531.5,424.6 532.4,425.5 533.3,423.9 534.4,424.0 535.6,427.0 536.7,427.3 537.6,429.0 538.5,427.3 539.5,426.9 540.4,427.2 541.3,428.0 542.2,427.3 543.2,427.5 544.1,426.3 545.1,425.7 546.0,422.9 547.0,422.5 547.9,422.1 548.9,422.3 550.0,424.1 551.2,423.4 552.3,425.0 553.4,423.0 554.5,420.6 555.6,420.2 556.7,423.4 557.8,417.9 558.9,415.6 559.8,417.0 560.6,420.0 561.7,417.6 562.8,413.9 563.8,413.5 564.8,412.3 565.7,409.8 566.7,409.5 567.8,410.7 568.9,411.7 569.8,412.9 570.8,414.2 571.7,415.6 572.7,414.8 573.7,418.1 574.6,416.2 575.6,417.8 576.5,422.9 577.3,424.5 578.2,425.5 579.1,421.6 580.0,422.8 581.1,425.7 582.3,428.9 583.4,428.4 584.5,427.3 585.6,423.9 586.6,424.7 587.6,425.1 588.7,425.9 589.7,429.6 590.7,427.9 591.7,430.0 592.5,427.2 593.4,423.9 594.5,423.1 595.5,425.0 596.5,427.1 597.6,426.0 598.9,425.3 600.1,427.3 601.0,427.5 602.0,425.4 603.0,425.8 603.9,423.5 604.8,425.9 605.6,425.9 606.5,428.6 607.8,436.4 609.0,441.4 610.3,425.0 611.6,394.0 612.9,356.0 613.5,305.0 614.7,305.0 614.7,261.0 615.4,261.0 615.4,241.0 616.4,241.0 616.4,267.0 617.3,267.0 617.4,363.6 618.5,363.6 618.5,396.7 619.7,396.7 619.7,432.4 620.7,435.8 621.6,437.6 622.6,442.7 623.6,435.8 624.6,432.4 625.6,427.3 626.8,424.1 627.9,421.2 628.9,421.0 629.8,420.9 630.8,422.7 631.8,421.7 632.8,421.1 633.8,422.5 634.7,419.0 635.7,421.2 636.7,419.8 637.7,420.4 638.6,417.2 639.6,419.5 640.6,418.1 641.5,418.2 642.5,416.1 643.5,415.9 644.6,415.7 645.8,416.6 646.9,417.6 647.9,415.2 648.8,415.5 649.8,411.7 650.8,413.0 651.7,413.2 652.7,414.7 653.6,412.6 654.5,410.2 655.4,407.6 656.3,407.4 657.4,407.4 658.5,410.3 659.6,409.9 660.7,406.2 661.8,406.9 662.9,403.7 663.8,401.7 664.7,400.7 665.6,400.5 666.5,399.4 667.4,396.3 668.4,394.9 669.3,395.0 670.2,391.3 671.1,391.1 672.0,389.2 672.9,386.9 673.8,384.8 674.8,384.8 675.7,383.5 676.7,380.4 677.6,378.9 678.5,377.9 679.5,373.8 680.4,373.8 681.4,373.9 682.4,372.1 683.5,372.4 684.5,371.2 685.5,369.9 686.4,370.5 687.3,371.0 688.2,375.5 689.1,375.3 690.2,375.8 691.3,379.0 692.4,385.4 693.5,392.0 694.6,396.6 695.7,402.3 696.8,405.2 697.9,409.6 698.9,413.4 699.8,417.1 700.8,418.3 701.9,419.6 703.0,422.7 704.4,429.2 705.9,422.7 706.9,423.4 707.9,422.3 709.0,423.3 710.0,422.9 711.0,423.4 712.5,427.0 713.6,424.0 714.7,423.4 716.0,426.6 717.0,426.9 718.0,426.7 719.0,422.6 720.0,421.5 721.0,421.6 722.0,421.4 723.0,421.4 724.0,424.4 725.0,426.3 726.0,425.9 727.0,423.4 728.0,424.6 729.0,425.6 730.0,420.6 731.0,424.6 732.0,426.4 733.0,425.5 734.0,425.3 735.0,423.3 736.0,421.2 737.0,425.5 738.0,422.3 739.0,425.6 740.0,426.8 741.0,422.8 742.0,422.8 743.0,426.6 744.0,425.1 745.0,421.2 746.0,420.9 747.0,421.1 748.0,426.3 749.0,425.6 750.0,421.0 751.0,425.8 752.0,426.9 753.0,424.6 754.0,422.5 755.0,423.8 756.0,420.9 757.0,420.1 758.0,426.8 759.0,424.5 760.0,423.7 761.0,426.5 762.0,423.0 763.0,426.1 764.0,425.8 765.0,421.5 766.0,421.8 767.0,422.1 768.0,421.7 769.0,424.1 770.0,421.8 771.0,422.9 772.0,420.9 773.0,426.4 774.0,422.5 775.0,423.2 776.0,424.1 777.0,426.3 778.0,422.9 779.0,426.4 780.0,423.5 781.0,423.7 782.0,423.7 783.0,420.1 784.0,423.1 785.0,421.3 786.0,420.0 787.0,425.6 788.0,421.2 789.0,423.3 790.0,425.1 791.0,423.9 792.0,422.3 793.0,423.6 794.0,423.9 795.0,425.5 796.0,420.7 797.0,423.9 798.0,421.7 799.0,421.9 800.0,425.4 801.0,423.6 802.0,423.9 803.0,425.3 804.0,426.4 805.0,423.1 806.0,424.3 807.0,422.2 808.0,422.6" fill="none" stroke="#FF00FF" stroke-width="1" shape-rendering="crispEdges"/></svg><div style="position:absolute;left:660px;top:137px;height:14px;line-height:14px;font-size:14px;font-weight:bold;letter-spacing:0.6px;color:#FF00FF;white-space:nowrap">1.32v</div><div style="position:absolute;left:3px;top:537px;width:174px;height:20px;box-shadow:inset 1px 1px #808080, inset -1px -1px #FFFFFF"></div><div style="position:absolute;left:179px;top:537px;width:640px;height:20px;box-shadow:inset 1px 1px #808080, inset -1px -1px #FFFFFF"></div><div style="position:absolute;left:4px;top:539px;height:14px;line-height:14px;font-size:12px;letter-spacing:-0.55px;white-space:nowrap">2.9125</div><div style="position:absolute;left:180px;top:539px;height:14px;line-height:14px;font-size:12px;letter-spacing:-0.55px;white-space:nowrap">Use the mouse to drag the top measurement line, Measuring voltage</div>
</body></html>
